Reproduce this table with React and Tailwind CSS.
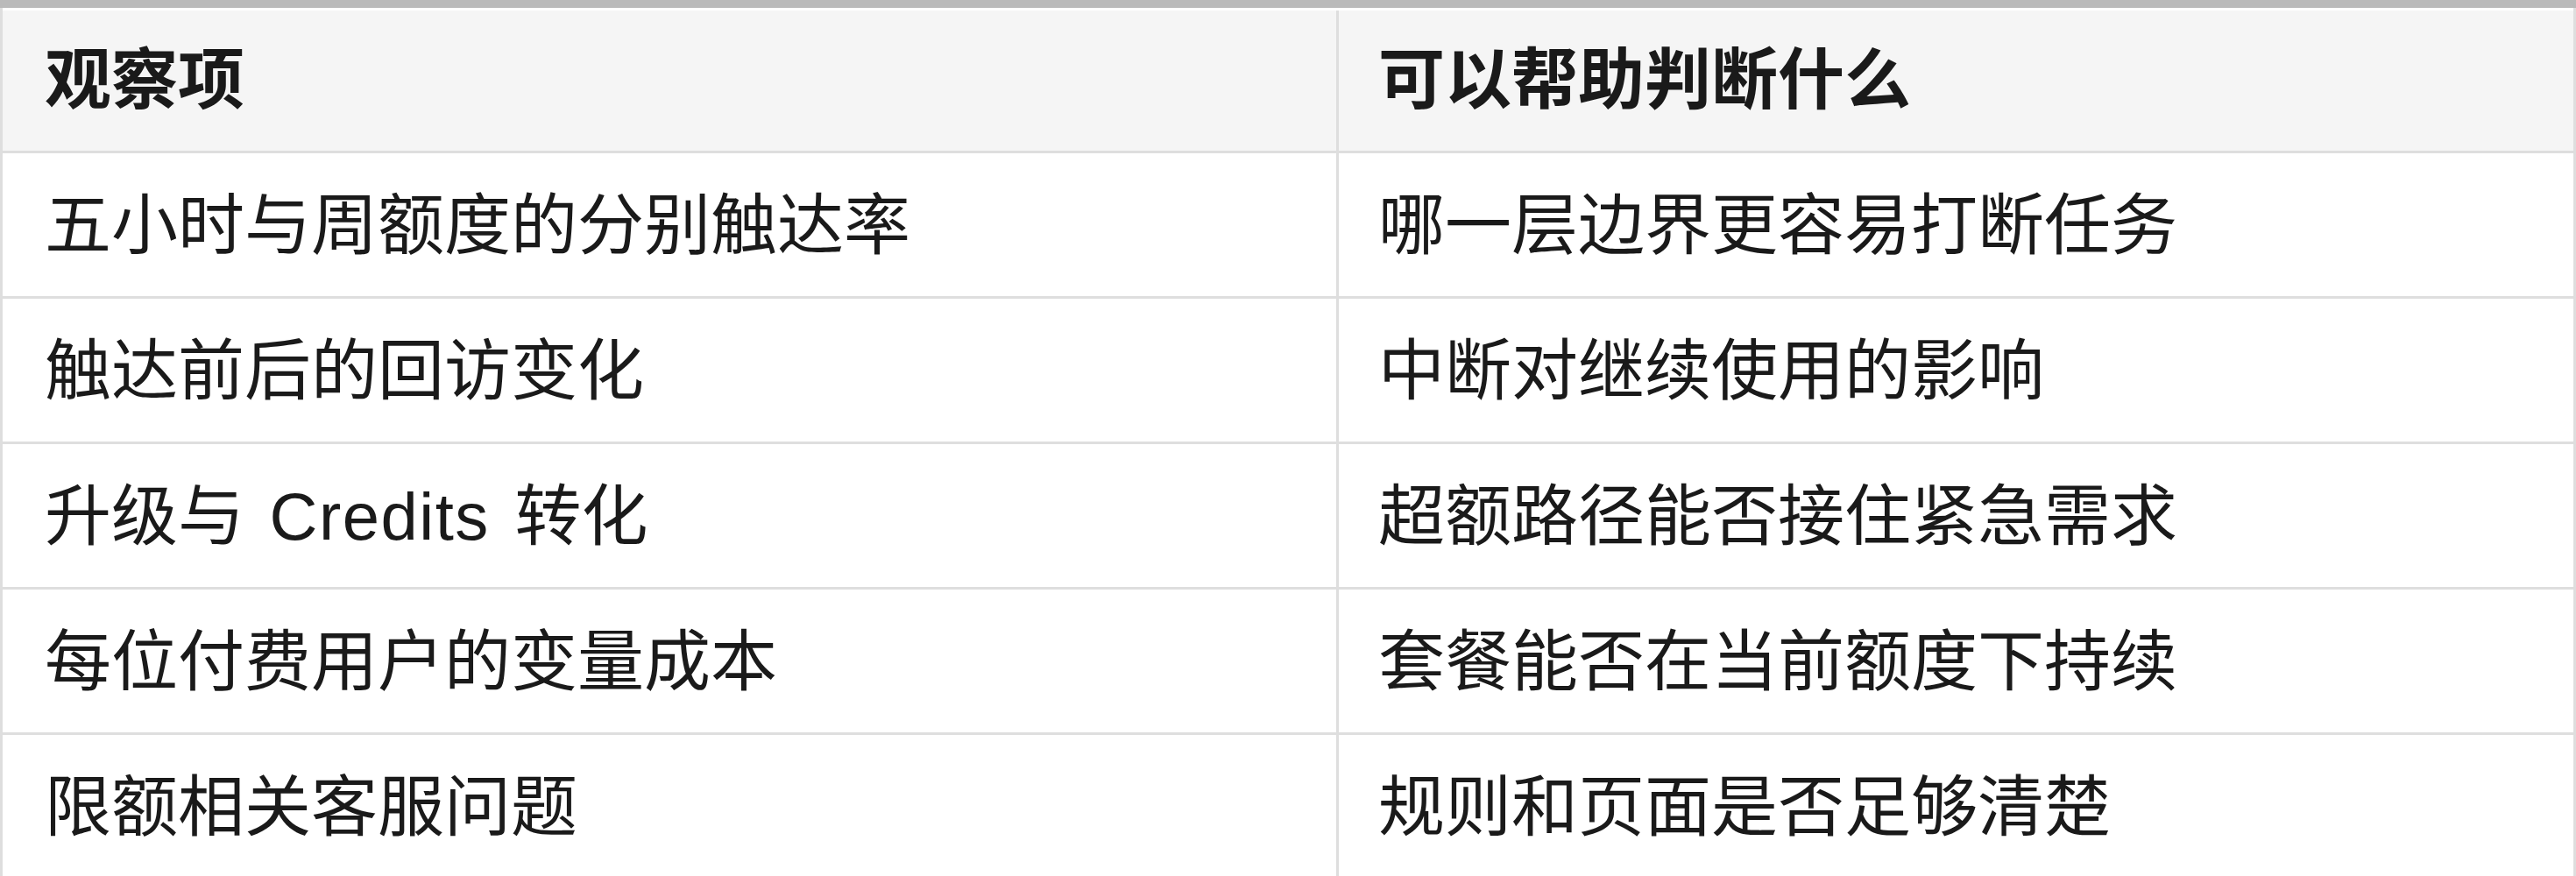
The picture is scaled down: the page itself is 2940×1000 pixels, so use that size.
import React from "react";

const rows = [
  ["五小时与周额度的分别触达率", "哪一层边界更容易打断任务"],
  ["触达前后的回访变化", "中断对继续使用的影响"],
  [
    <>
      升级与
      <span className="tracking-[1.5px] [word-spacing:6px]"> Credits </span>
      转化
    </>,
    "超额路径能否接住紧急需求",
  ],
  ["每位付费用户的变量成本", "套餐能否在当前额度下持续"],
  ["限额相关客服问题", "规则和页面是否足够清楚"],
];

const font = { fontFamily: '"Liberation Sans", "Noto Sans CJK SC", sans-serif' };

const App = () => {
  return (
    <div className="w-[2940px] h-[1000px] overflow-hidden bg-white text-[#1a1a1a]" style={font}>
      <div className="h-[9px] bg-[#bababa]" />
      <div className="border-l-[3px] border-r-[3px] border-[#dedede]">
        <div className="grid grid-cols-[1525px_1fr] bg-[#f5f5f5] border-t-[3px] border-t-white">
          <div className="h-[163px] flex items-center px-[48px] text-[76px] font-bold border-b-[3px] border-r-[3px] border-[#dedede]">
            观察项
          </div>
          <div className="h-[163px] flex items-center px-[45px] text-[76px] font-bold border-b-[3px] border-[#dedede]">
            可以帮助判断什么
          </div>
        </div>
        {rows.map(([a, b], i) => (
          <div key={i} className="grid grid-cols-[1525px_1fr]">
            <div className="h-[166px] flex items-center px-[48px] pt-[3px] text-[76px] leading-none border-b-[3px] border-r-[3px] border-[#dedede]">
              <span>{a}</span>
            </div>
            <div className="h-[166px] flex items-center px-[45px] pt-[3px] text-[76px] leading-none border-b-[3px] border-[#dedede]">
              {b}
            </div>
          </div>
        ))}
      </div>
    </div>
  );
};

export default App;
